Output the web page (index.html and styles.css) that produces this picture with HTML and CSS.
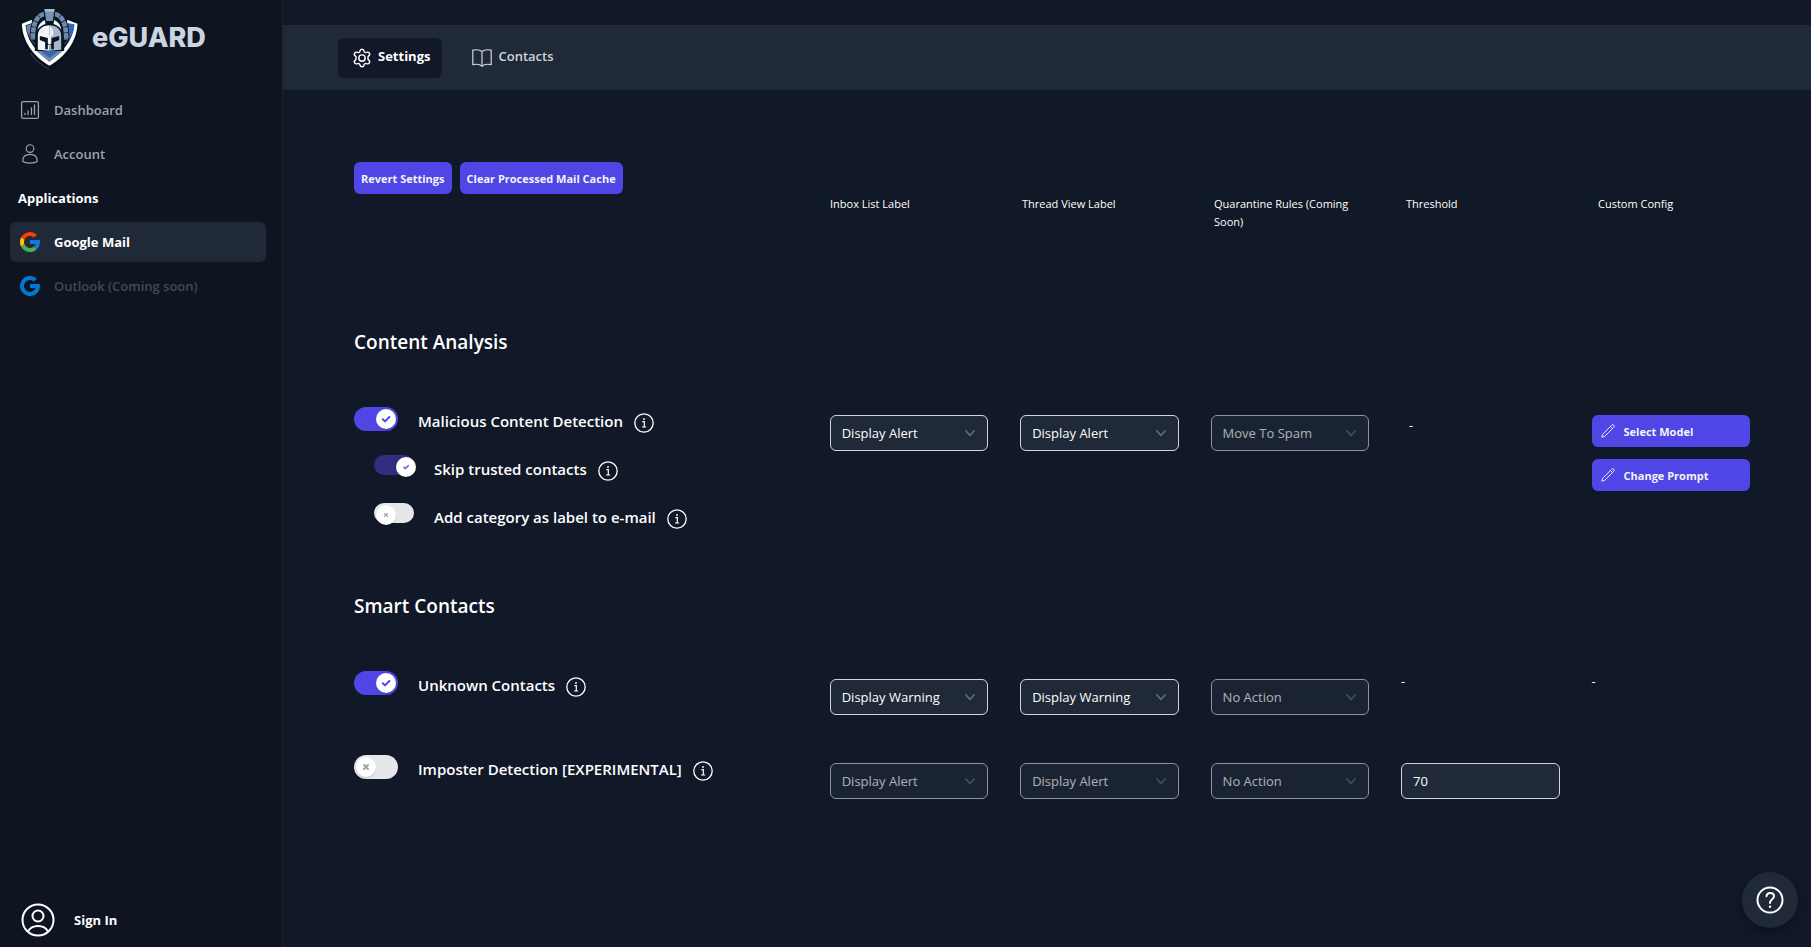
FILE: index.html
```
<!DOCTYPE html>
<html lang="en">
<head>
  <meta charset="UTF-8">
  <meta name="viewport" content="width=device-width, initial-scale=1">
  <title>eGUARD</title>
  <link rel="stylesheet" href="styles.css">
</head>
<body>
  <!-- Shared icons -->
  <svg class="sprite" aria-hidden="true">
    <symbol id="info" viewBox="0 0 20 20">
      <circle cx="10" cy="10" r="9.2" fill="none" stroke="currentColor" stroke-width="1.3"/>
      <path d="M8.3 8.7h2v5M8 14h4.2" fill="none" stroke="currentColor" stroke-width="1.2"/>
      <circle cx="10" cy="6" r="0.9" fill="currentColor"/>
    </symbol>
    <symbol id="chevron" viewBox="0 0 12 12">
      <path d="M1.5 3.5 6 8.5l4.5-5" fill="none" stroke="currentColor" stroke-width="1.5"/>
    </symbol>
    <symbol id="check" viewBox="0 0 12 12">
      <path d="M2.8 6.3 5 8.4l4.4-4.4" fill="none" stroke="currentColor" stroke-width="2" stroke-linecap="round" stroke-linejoin="round"/>
    </symbol>
    <symbol id="cross" viewBox="0 0 12 12">
      <path d="M4 8 6 6m0 0 2-2M6 6 4 4m2 2 2 2" fill="none" stroke="currentColor" stroke-width="2" stroke-linecap="round"/>
    </symbol>
    <symbol id="pencil" viewBox="0 0 16 16">
      <path d="M1 15 1.800 11.800 12.200 1.400a1.600 1.600 0 0 1 2.400 2.400L4.200 14.200zM10.800 2.800l2.400 2.400" fill="none" stroke="currentColor" stroke-width="1.100" stroke-linejoin="round"/>
    </symbol>
    <symbol id="g-shape" viewBox="0 0 48 48">
      <path d="M43.6 20.1H24v8h11.3A12 12 0 1 1 32 15.1l5.7-5.7A20 20 0 1 0 44 24c0-1.300-.1-2.700-.4-3.900z" fill="currentColor"/>
    </symbol>
  </svg>

  <aside class="sidebar">
    <a class="brand" href="#">
      <svg class="brand-logo" viewBox="60 20 176 192" aria-hidden="true">
        <path d="M58 62 98 50 148 18 198 50 238 62C238 130 200 182 148 212 96 182 58 130 58 62z" fill="#05131f"/>
        <path d="M90 158c16 22 34 36 58 50" fill="none" stroke="#51677f" stroke-width="2"/>
        <path d="M65 70 95 58v62l54 60 52-60V58l31 12c-2 54-36 98-84 126C100 168 67 124 65 70z" fill="#fff"/>
        <path d="M76 75 94 69v50l54 62 54-62V69l20 6c-4 45-34 82-74 107C108 157 80 120 76 75z" fill="#0a1a2b"/>
        <path d="M78 76 94 70v50C85 107 80 93 78 76z" fill="#6e86a8"/>
        <path d="M204 69 223 72c-2 22-8 38-18 50z" fill="#3568b4"/>
        <path d="M108 151h80l-40 34z" fill="#7389a8"/>
        <path d="M120 151h56l-28 21z" fill="#3568b4"/>
        <path d="M104 92C106 62 124 47 148 47s42 15 44 45v60h-88z" fill="#071522"/>
        <path d="M132 41c-23 5-35 31-34 78M164 41c23 5 35 31 34 78" fill="none" stroke="#071522" stroke-width="19"/>
        <path d="M132 41c-23 5-35 31-34 78M164 41c23 5 35 31 34 78" fill="none" stroke="#7188a8" stroke-width="14" stroke-dasharray="16 2"/>
        <path d="M112 88c3-16 11-24 22-29l2 12c-10 3-18 9-24 17zM184 88c-3-16-11-24-22-29l-2 12c10 3 18 9 24 17z" fill="#f1f4f8"/>
        <path d="M130 23h36l-6 42h-24z" fill="#071522"/>
        <path d="M133 26h30l-5 36h-20z" fill="#7a90af"/>
        <path d="M133 26h30l-1 8h-28z" fill="#a9b9cc"/>
        <path d="M113 148v-42c0-20 15-31 35-31v76z" fill="#f1f4f8"/>
        <path d="M183 148v-42c0-20-15-31-35-31v76z" fill="#a8b7c9"/>
        <path d="M148 76c11 7 14 19 10 31h-10z" fill="#e8edf3"/>
        <path d="m119 107 24 6v16l5 5 6-5v-16l23-6v12l-16 7v21h-8v-13h-10v13h-8v-21l-16-7z" fill="#071522"/>
        <path d="M144 106h8v24l-4 3-4-3z" fill="#f1f4f8"/>
      </svg>
      <span>eGUARD</span>
    </a>

    <nav class="side-nav">
      <a href="#">
        <svg viewBox="0 0 20 20" fill="none" stroke="currentColor" stroke-width="1.3" stroke-linecap="round">
          <rect x="1.600" y="1.600" width="16.800" height="16.800" rx="1.500"/>
          <path d="M5 13.500v1M8 11v3.500M11.500 8v6.500M14.500 5v9.500"/>
        </svg>
        Dashboard
      </a>
      <a href="#">
        <svg viewBox="0 0 20 22" fill="none" stroke="currentColor" stroke-width="1.3">
          <circle cx="10" cy="5" r="4.200"/>
          <path d="M2 19c0-5 3-7.500 8-7.500s8 2.500 8 7.500c-3 2.700-13 2.700-16 0z"/>
        </svg>
        Account
      </a>
      <h2>Applications</h2>
      <a class="active" href="#">
        <svg viewBox="4 4 40 40">
          <path d="M43.600 20.100H24v8h11.300a12 12 0 0 1-4.100 5.600l6.200 5.200C37 39.200 44 34 44 24c0-1.300-.1-2.700-.4-3.900z" fill="#1976d2"/>
          <path d="M6.300 14.700l6.600 4.800A12 12 0 0 1 24 12c3.100 0 5.800 1.200 8 3.100l5.700-5.700A20 20 0 0 0 6.300 14.700z" fill="#ff3d00"/>
          <path d="M24 44c5.200 0 9.900-2 13.400-5.200l-6.200-5.200A12 12 0 0 1 12.700 28l-6.500 5A20 20 0 0 0 24 44z" fill="#4caf50"/>
          <path d="M6.300 14.700a20 20 0 0 0-.1 18.300l6.500-5a12 12 0 0 1 .2-8.500z" fill="#ffc107"/>
        </svg>
        Google Mail
      </a>
      <a class="disabled" href="#" aria-disabled="true">
        <svg class="outlook" viewBox="4 4 40 40"><use href="#g-shape" width="48" height="48"/></svg>
        Outlook (Coming soon)
      </a>
    </nav>

    <a class="sign-in" href="#">
      <svg viewBox="0 0 34 34" fill="none" stroke="currentColor" stroke-width="2">
        <circle cx="17" cy="17" r="15.500"/>
        <circle cx="17" cy="13" r="5.500"/>
        <path d="M7 28.500c2-4 6-5.500 10-5.500s8 1.500 10 5.500"/>
      </svg>
      Sign In
    </a>
  </aside>

  <div class="page">
    <nav class="tabs">
      <a class="active" href="#">
        <svg viewBox="0 0 24 24" fill="none" stroke="currentColor" stroke-width="1.700" stroke-linejoin="round">
          <path d="M9.500 3.800Q9.800 1.500 12 1.500t2.500 2.300l.4 1 1.200.7 1.200-.2q2.300-1 3.500.9t-.8 3.300l-.8.900v3.200l.8.900q2 1.400.8 3.300t-3.500.9l-1.200-.2-1.200.7-.4 1q-.3 2.300-2.500 2.300t-2.500-2.300l-.4-1-1.200-.7-1.200.2q-2.300 1-3.500-.9T4 14.500l.8-.9v-3.200L4 9.500Q2 8.100 3.200 6.200t3.500-.9l1.200.2 1.200-.7z"/>
          <circle cx="12" cy="12" r="3.800"/>
        </svg>
        <span>Settings</span>
      </a>
      <a href="#">
        <svg viewBox="0 0 20 20" fill="none" stroke="currentColor" stroke-width="1.200" stroke-linejoin="round">
          <path d="M10 3.500C8 1.800 4 1.500.8 2.200v14.500c3.200-.7 7.200-.4 9.200 1.500 2-1.900 6-2.200 9.200-1.500V2.200C16 1.500 12 1.800 10 3.500zM10 3.500v14.700"/>
        </svg>
        <span>Contacts</span>
      </a>
    </nav>

    <main>
      <div class="head-row">
        <div class="actions">
          <button class="btn" type="button">Revert Settings</button>
          <button class="btn" type="button">Clear Processed Mail Cache</button>
        </div>
        <div class="col-title">Inbox List Label</div>
        <div class="col-title">Thread View Label</div>
        <div class="col-title">Quarantine Rules (Coming Soon)</div>
        <div class="col-title">Threshold</div>
        <div class="col-title">Custom Config</div>
      </div>

      <!-- Content Analysis -->
      <section>
        <h1>Content Analysis</h1>
        <div class="rule">
          <div class="options">
            <div class="option">
              <span class="switch">
                <input type="checkbox" id="malicious" checked>
                <span class="knob"><svg><use href="#check"/></svg></span>
              </span>
              <label for="malicious">Malicious Content Detection</label>
              <svg class="info"><use href="#info"/></svg>
            </div>
            <div class="option sub">
              <span class="switch small">
                <input type="checkbox" id="trusted" checked>
                <span class="knob"><svg><use href="#check"/></svg></span>
              </span>
              <label for="trusted">Skip trusted contacts</label>
              <svg class="info"><use href="#info"/></svg>
            </div>
            <div class="option sub">
              <span class="switch small">
                <input type="checkbox" id="category">
                <span class="knob"><svg><use href="#cross"/></svg></span>
              </span>
              <label for="category">Add category as label to e-mail</label>
              <svg class="info"><use href="#info"/></svg>
            </div>
          </div>
          <div class="select">
            <select aria-label="Malicious content inbox label"><option>Display Alert</option></select>
            <svg><use href="#chevron"/></svg>
          </div>
          <div class="select">
            <select aria-label="Malicious content thread label"><option>Display Alert</option></select>
            <svg><use href="#chevron"/></svg>
          </div>
          <div class="select off">
            <select aria-label="Malicious content quarantine rule" disabled><option>Move To Spam</option></select>
            <svg><use href="#chevron"/></svg>
          </div>
          <div class="none inset">-</div>
          <div class="config">
            <button class="btn" type="button"><svg><use href="#pencil"/></svg>Select Model</button>
            <button class="btn" type="button"><svg><use href="#pencil"/></svg>Change Prompt</button>
          </div>
        </div>
      </section>

      <!-- Smart Contacts -->
      <section>
        <h1>Smart Contacts</h1>
        <div class="rule">
          <div class="option">
            <span class="switch">
              <input type="checkbox" id="unknown" checked>
              <span class="knob"><svg><use href="#check"/></svg></span>
            </span>
            <label for="unknown">Unknown Contacts</label>
            <svg class="info"><use href="#info"/></svg>
          </div>
          <div class="select">
            <select aria-label="Unknown contacts inbox label"><option>Display Warning</option></select>
            <svg><use href="#chevron"/></svg>
          </div>
          <div class="select">
            <select aria-label="Unknown contacts thread label"><option>Display Warning</option></select>
            <svg><use href="#chevron"/></svg>
          </div>
          <div class="select off">
            <select aria-label="Unknown contacts quarantine rule" disabled><option>No Action</option></select>
            <svg><use href="#chevron"/></svg>
          </div>
          <div class="none">-</div>
          <div class="none">-</div>
        </div>
        <div class="rule">
          <div class="option">
            <span class="switch">
              <input type="checkbox" id="imposter">
              <span class="knob"><svg><use href="#cross"/></svg></span>
            </span>
            <label for="imposter">Imposter Detection [EXPERIMENTAL]</label>
            <svg class="info"><use href="#info"/></svg>
          </div>
          <div class="select off">
            <select aria-label="Imposter inbox label" disabled><option>Display Alert</option></select>
            <svg><use href="#chevron"/></svg>
          </div>
          <div class="select off">
            <select aria-label="Imposter thread label" disabled><option>Display Alert</option></select>
            <svg><use href="#chevron"/></svg>
          </div>
          <div class="select off">
            <select aria-label="Imposter quarantine rule" disabled><option>No Action</option></select>
            <svg><use href="#chevron"/></svg>
          </div>
          <div class="select">
            <input type="text" aria-label="Imposter threshold" value="70">
          </div>
        </div>
      </section>
    </main>
  </div>

  <button class="help" type="button" aria-label="Help">
    <svg viewBox="0 0 28 28" fill="none" stroke="currentColor" stroke-width="2">
      <circle cx="14" cy="14" r="12.500"/>
      <path d="M10.500 10.200C10.800 8 12.200 7 14.200 7c2.200 0 3.800 1.300 3.800 3.300 0 2.900-4 3.200-4 6.700" stroke-linecap="round"/>
      <circle cx="14" cy="20.800" r="1.200" fill="currentColor" stroke="none"/>
    </svg>
  </button>
</body>
</html>
```
FILE: styles.css
```
* {
  box-sizing: border-box;
}
body {
  margin: 0;
  min-height: 100vh;
  display: flex;
  background: #111827;
  color: #fff;
  font-family: "Segoe UI", "Open Sans", "Noto Sans", sans-serif;
  font-size: 13px;
}
a {
  color: inherit;
  text-decoration: none;
}
h1, h2 {
  margin: 0;
}
input, select, button {
  font: inherit;
  color: inherit;
}
.sprite {
  position: absolute;
  width: 0;
  height: 0;
}

/* Sidebar */
.sidebar {
  flex: 0 0 283px;
  display: flex;
  flex-direction: column;
  background: #0e1521;
  border-right: 1px solid #1b2432;
}
.brand {
  display: flex;
  align-items: center;
  gap: 13px;
  padding: 7px 20px 0;
  color: #cbd5e1;
  font-family: Inter, sans-serif;
  font-size: 27px;
  font-weight: 800;
}
.brand span {
  line-height: 32px;
  padding-bottom: 2px;
}
.brand-logo {
  width: 59px;
  height: 64px;
}
.side-nav {
  display: flex;
  flex-direction: column;
  gap: 4px;
  padding: 19px 16px 0 10px;
}
.side-nav a {
  display: flex;
  align-items: center;
  gap: 14px;
  height: 40px;
  padding: 0 10px;
  border-radius: 6px;
  color: #9ca3af;
  font-weight: 600;
}
.side-nav svg {
  width: 20px;
  height: 20px;
}
.side-nav h2 {
  padding-left: 8px;
  font-size: 13px;
  font-weight: 700;
  line-height: 40px;
}
.side-nav .active {
  background: #1f2937;
  color: #fff;
  font-weight: 700;
}
.side-nav .disabled {
  color: #404955;
}
.side-nav .outlook {
  color: #0078d4;
}
.sign-in {
  display: flex;
  align-items: center;
  gap: 19px;
  margin-top: auto;
  padding: 0 21px 10px;
  font-weight: 700;
}
.sign-in svg {
  width: 34px;
  height: 34px;
}

/* Top tabs */
.page {
  flex: 1;
  min-width: 0;
  padding-top: 25px;
}
.tabs {
  display: flex;
  gap: 16px;
  padding: 13px 55px 12px;
  background: #1f2937;
}
.tabs a {
  display: flex;
  align-items: center;
  gap: 6px;
  height: 40px;
  padding: 0 12px 0 14px;
  border-radius: 6px;
  color: #d1d5db;
  font-weight: 600;
}
.tabs svg {
  width: 20px;
  height: 20px;
}
.tabs span {
  padding-bottom: 5px;
}
.tabs .active {
  background: #111827;
  color: #fff;
  font-weight: 700;
}

/* Settings */
main {
  padding: 72px 61px 0 71px;
}
.head-row, .rule {
  display: grid;
  column-gap: 32px;
  align-items: start;
}
.head-row {
  grid-template-columns: 111fr repeat(5, minmax(0, 40fr));
  margin-right: -8px;
}
.rule {
  grid-template-columns: 14fr repeat(5, minmax(0, 5fr));
}
.rule + .rule {
  margin-top: 40px;
}
.actions {
  display: flex;
  gap: 8px;
}
.btn {
  display: flex;
  align-items: center;
  height: 32px;
  padding: 0 8px;
  border: none;
  border-radius: 6px;
  background: #4f46e5;
  color: #f3f4f6;
  font-size: 11px;
  font-weight: 700;
  white-space: nowrap;
  cursor: pointer;
}
.actions .btn {
  padding: 0 7px;
}
.btn svg {
  width: 14px;
  height: 14px;
  margin: 0 9px 0 1px;
}
.col-title {
  padding-top: 33px;
  font-size: 11px;
  line-height: 18px;
}
section {
  padding-top: 97px;
}
section + section {
  padding-top: 61px;
}
h1 {
  font-size: 19px;
  font-weight: 600;
  line-height: 28px;
}
h1 + .rule {
  margin-top: 51px;
}
.options {
  display: grid;
  gap: 20px;
}
.option {
  display: flex;
  height: 28px;
  font-size: 15px;
  font-weight: 600;
  line-height: 28px;
  white-space: nowrap;
}
.option.sub {
  padding-left: 20px;
}
.info {
  width: 20px;
  height: 20px;
  margin: 6px 0 0 11px;
}

/* Switch */
.switch {
  position: relative;
  width: 44px;
  height: 24px;
  margin-right: 20px;
}
.switch input {
  display: block;
  appearance: none;
  width: 100%;
  height: 100%;
  margin: 0;
  border-radius: 12px;
  background: #e5e7eb;
  cursor: pointer;
}
.switch input:checked {
  background: #4f46e5;
}
.switch.small {
  width: 40px;
  height: 20px;
}
.switch.small input:checked {
  background: #312e81;
}
.knob {
  position: absolute;
  top: 2px;
  left: 2px;
  display: grid;
  place-items: center;
  width: 20px;
  height: 20px;
  border-radius: 50%;
  background: #fff;
  color: #9ca3af;
  box-shadow: 0 1px 2px rgba(0, 0, 0, 0.15);
  pointer-events: none;
}
.switch input:checked + .knob {
  left: 22px;
  color: #4f46e5;
}
.knob svg {
  width: 12px;
  height: 12px;
}
.small .knob svg {
  width: 8px;
  height: 8px;
}

/* Fields */
.select {
  position: relative;
  margin-top: 8px;
}
.select select, .select input {
  display: block;
  appearance: none;
  width: 100%;
  height: 36px;
  padding: 0 11px;
  border: 1px solid #d1d5db;
  border-radius: 6px;
  background: #1f2937;
}
.select svg {
  position: absolute;
  top: 12px;
  right: 12px;
  width: 12px;
  height: 12px;
  color: #6b7280;
  pointer-events: none;
}
.select.off {
  opacity: 0.65;
}
.select.off select {
  opacity: 1;
}
.none {
  line-height: 20px;
}
.none.inset {
  padding: 8px;
}
.config {
  display: grid;
  gap: 12px;
  margin-top: 8px;
}

.help {
  position: fixed;
  right: 13px;
  bottom: 19px;
  display: grid;
  place-items: center;
  width: 56px;
  height: 56px;
  padding: 0;
  border: none;
  border-radius: 50%;
  background: #1f2937;
  box-shadow: 0 4px 12px rgba(0, 0, 0, 0.3);
  cursor: pointer;
}
.help svg {
  width: 28px;
  height: 28px;
}
```
